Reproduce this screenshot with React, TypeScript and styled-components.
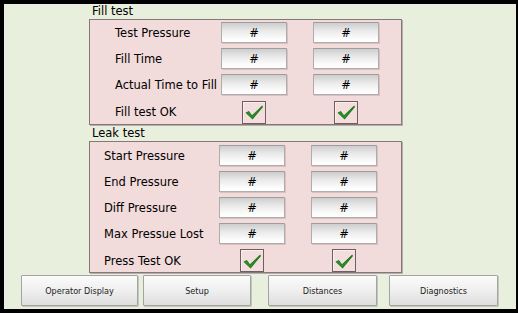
import React from "react";
import styled, { createGlobalStyle } from "styled-components";

const Global = createGlobalStyle`
  html, body { margin: 0; padding: 0; background: #000; }
  body { font-family: "DejaVu Sans", sans-serif; }
`;

const Frame = styled.div`
  box-sizing: border-box;
  width: 518px;
  height: 313px;
  border-style: solid;
  border-color: #000;
  border-width: 4px 2px 4px 4px;
  background: #e8efdc;
  display: flex;
  flex-direction: column;
`;

const Sections = styled.div`
  padding-left: 85px;
  width: 313px;
  display: flex;
  flex-direction: column;
`;

const SectionTitle = styled.div<{ $h: number }>`
  height: ${(p) => p.$h}px;
  line-height: ${(p) => p.$h}px;
  padding-left: 3px;
  font-size: 11.5px;
  color: #000;
`;

const Panel = styled.div<{ $pl: number; $labelW: number; $pt: number; $rows: number; $last: number }>`
  box-sizing: border-box;
  width: 313px;
  background: #f2dbdb;
  border: 1px solid #857878;
  box-shadow: 1px 1px 0 #b9acac;
  padding: ${(p) => p.$pt}px 0 0 ${(p) => p.$pl}px;
  display: grid;
  grid-template-columns: ${(p) => p.$labelW}px 66px 66px;
  grid-template-rows: repeat(${(p) => p.$rows}, 21px) ${(p) => p.$last}px;
  column-gap: 26px;
  row-gap: 5px;
`;

const Label = styled.div`
  display: flex;
  align-items: center;
  font-size: 11.5px;
  color: #000;
  white-space: nowrap;
`;

const Field = styled.div`
  box-sizing: border-box;
  height: 21px;
  border: 1px solid #b0acac;
  border-top-color: #a09c9c;
  background: linear-gradient(#cdcdcd, #e9e9e9 40%, #fbfbfb 80%, #ffffff);
  box-shadow: 1px 1px 0 rgba(120, 100, 100, 0.22);
  display: flex;
  align-items: center;
  justify-content: center;
  font-size: 11.5px;
  color: #000;
`;

const CheckCell = styled.div`
  display: flex;
  align-items: center;
  justify-content: center;
`;

const CheckBox = styled.div`
  box-sizing: border-box;
  width: 24px;
  height: 23px;
  border: 1px solid #6d5f5f;
  background: #f3dddd;
  box-shadow: inset 1px 1px 0 #fbeeee;
  display: flex;
  align-items: center;
  justify-content: center;
`;

const ButtonBar = styled.div`
  display: flex;
  padding: 2px 0 0 17px;
`;

const Button = styled.div<{ $w: number; $ml: number }>`
  box-sizing: border-box;
  width: ${(p) => p.$w}px;
  height: 31px;
  margin-left: ${(p) => p.$ml}px;
  border: 1px solid #a3a3a3;
  border-radius: 1px;
  background: linear-gradient(#fbfbfb, #efefef 50%, #dedede);
  box-shadow: 1px 1px 0 #c4c8bc;
  display: flex;
  align-items: center;
  justify-content: center;
  font-family: "DejaVu Sans Condensed", "DejaVu Sans", sans-serif;
  font-size: 9px;
  color: #222;
`;

const Check = () => (
  <svg width="20" height="18" viewBox="0 0 20 18">
    <path d="M1.5 9.8 L4.8 8 L8 12.3 L18.2 2.6 L19 4 L8.6 16.4 Z" fill="#1b761b" />
    <path d="M2.6 9.9 L4.8 8.9 L8 13.3 L17.8 3.8 L8.4 15.2 Z" fill="#2a942a" />
  </svg>
);

const fillRows = ["Test Pressure", "Fill Time", "Actual Time to Fill"];
const leakRows = ["Start Pressure", "End Pressure", "Diff Pressure", "Max Pressue Lost"];

const Rows = ({ rows, okLabel }: { rows: string[]; okLabel: string }) => (
  <>
    {rows.map((r) => (
      <React.Fragment key={r}>
        <Label>{r}</Label>
        <Field>#</Field>
        <Field>#</Field>
      </React.Fragment>
    ))}
    <Label>{okLabel}</Label>
    <CheckCell>
      <CheckBox>
        <Check />
      </CheckBox>
    </CheckCell>
    <CheckCell>
      <CheckBox>
        <Check />
      </CheckBox>
    </CheckCell>
  </>
);

export default function App() {
  return (
    <>
      <Global />
      <Frame>
        <Sections>
          <SectionTitle $h={15}>Fill test</SectionTitle>
          <Panel $pl={25} $labelW={80} $pt={2} $rows={3} $last={24}>
            <Rows rows={fillRows} okLabel="Fill test OK" />
          </Panel>
          <SectionTitle $h={16}>Leak test</SectionTitle>
          <Panel $pl={14} $labelW={89} $pt={3} $rows={4} $last={23}>
            <Rows rows={leakRows} okLabel="Press Test OK" />
          </Panel>
        </Sections>
        <ButtonBar>
          <Button $w={117} $ml={0}>Operator Display</Button>
          <Button $w={108} $ml={5}>Setup</Button>
          <Button $w={109} $ml={17}>Distances</Button>
          <Button $w={109} $ml={12}>Diagnostics</Button>
        </ButtonBar>
      </Frame>
    </>
  );
}
